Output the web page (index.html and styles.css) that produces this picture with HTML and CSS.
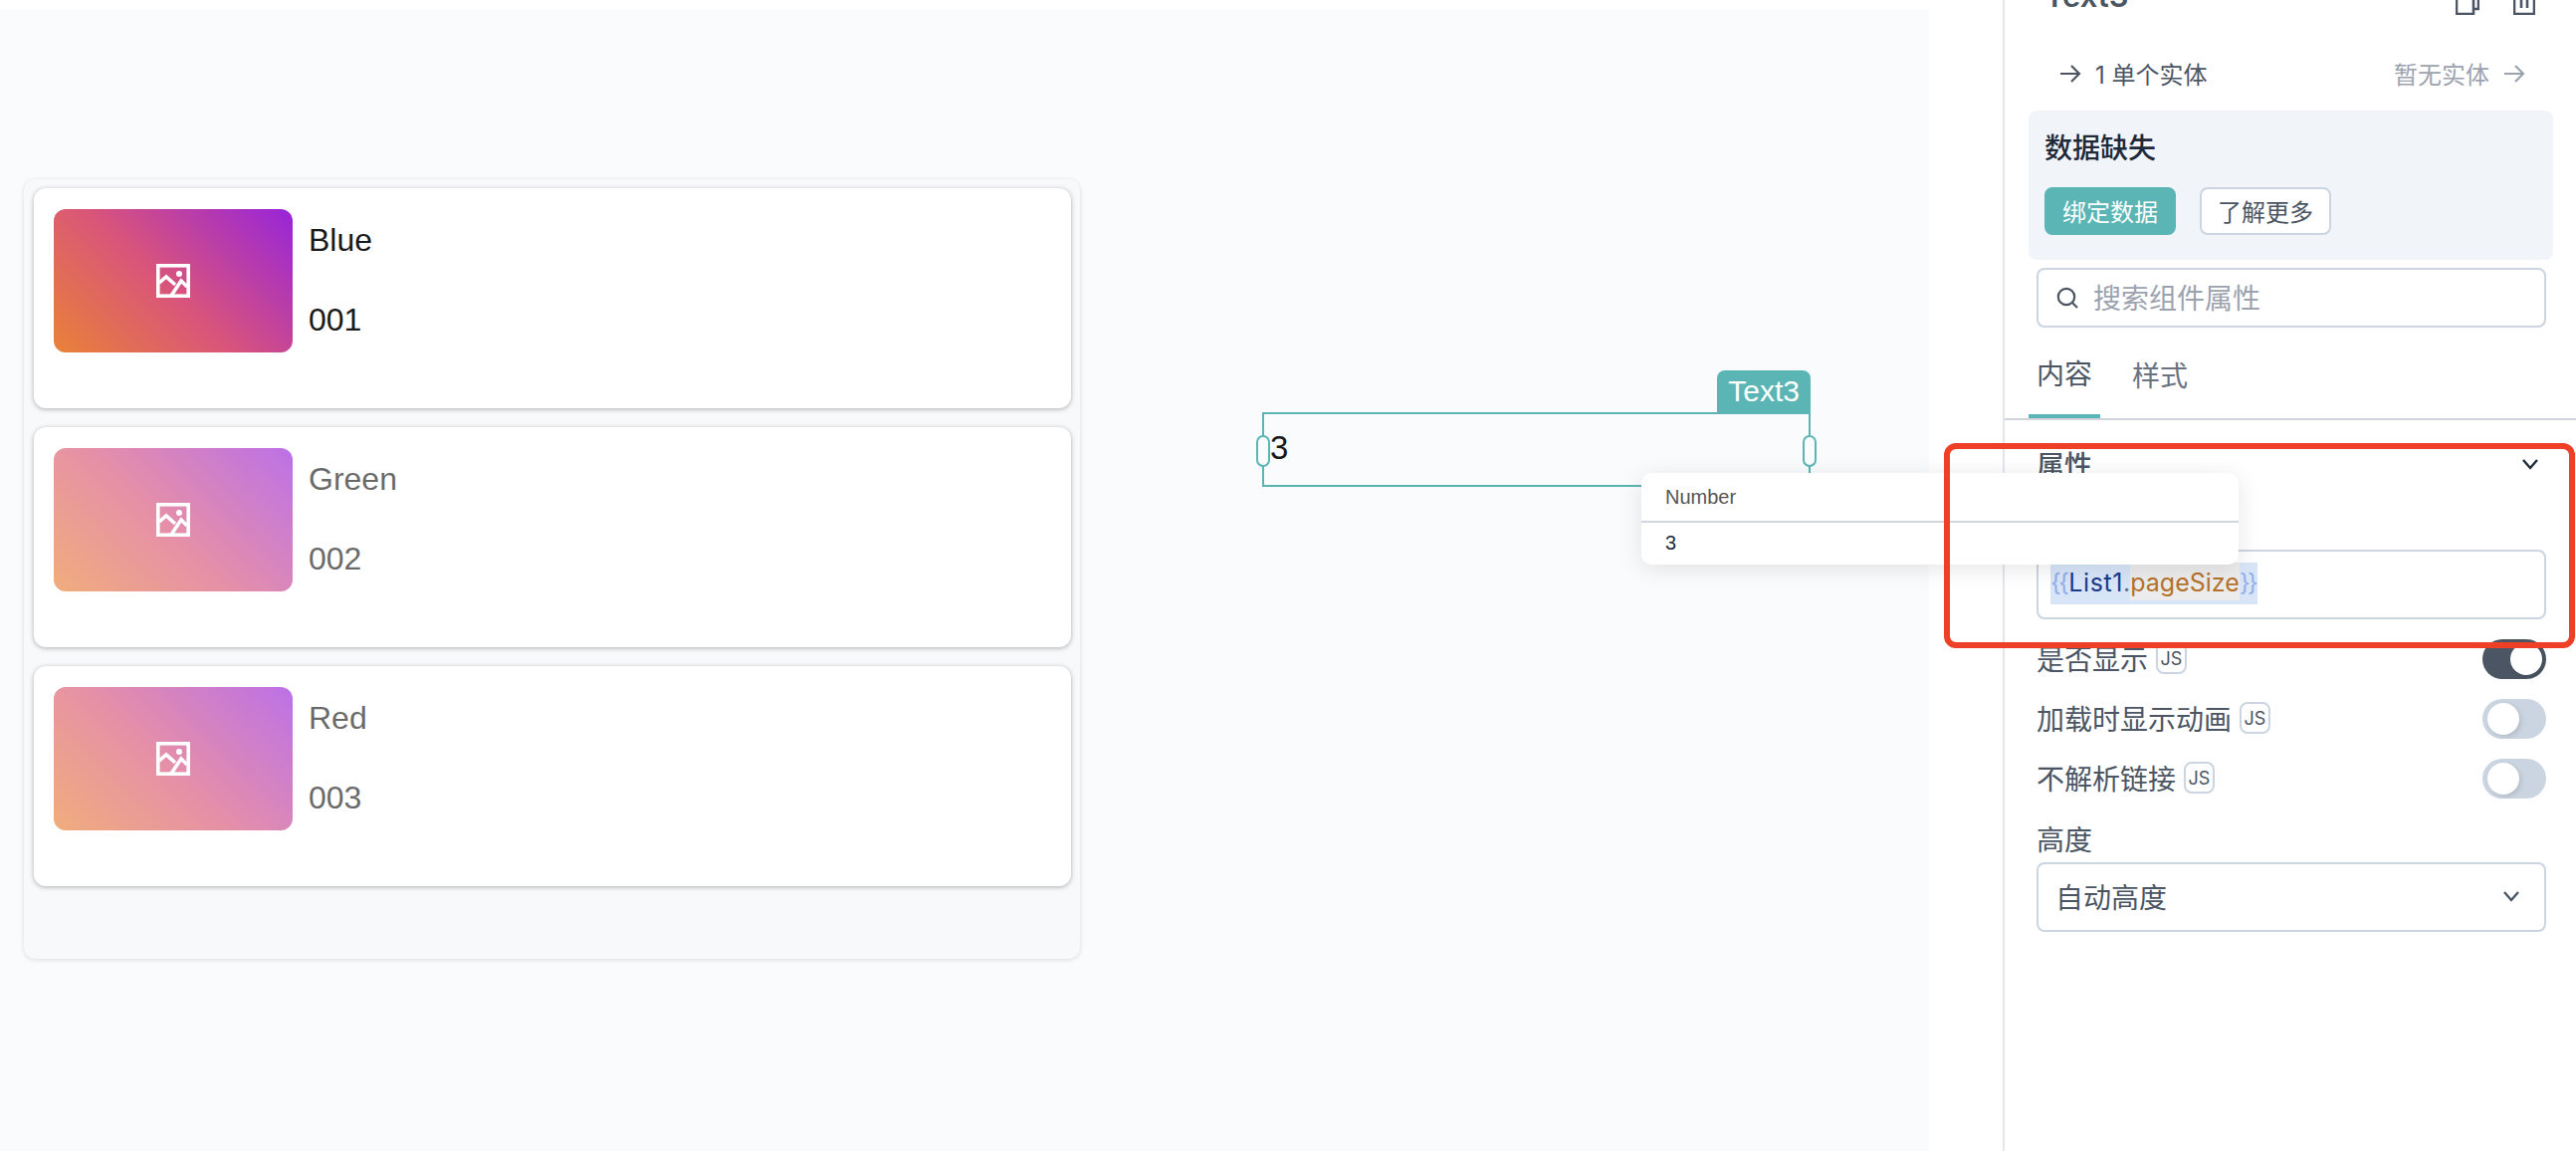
FILE: index.html
```html
<!DOCTYPE html>
<html lang="zh">
<head>
<meta charset="utf-8">
<title>Text3</title>
<link rel="stylesheet" href="styles.css">
</head>
<body>
<div class="app">
  <main class="canvas">
    <div class="list">
      <article class="card">
        <div class="thumb">
          <svg class="thumb-icon" viewBox="0 0 34 34"><rect x="1.8" y="1.8" width="30.4" height="30.4"/><circle cx="23" cy="10" r="3"/><path d="M3 19l7-6 9 8M15 32l10-15 6 6"/></svg>
        </div>
        <div class="card-text"><div>Blue</div><div>001</div></div>
      </article>
      <article class="card dim">
        <div class="thumb">
          <svg class="thumb-icon" viewBox="0 0 34 34"><rect x="1.8" y="1.8" width="30.4" height="30.4"/><circle cx="23" cy="10" r="3"/><path d="M3 19l7-6 9 8M15 32l10-15 6 6"/></svg>
        </div>
        <div class="card-text"><div>Green</div><div>002</div></div>
      </article>
      <article class="card dim">
        <div class="thumb">
          <svg class="thumb-icon" viewBox="0 0 34 34"><rect x="1.8" y="1.8" width="30.4" height="30.4"/><circle cx="23" cy="10" r="3"/><path d="M3 19l7-6 9 8M15 32l10-15 6 6"/></svg>
        </div>
        <div class="card-text"><div>Red</div><div>003</div></div>
      </article>
    </div>
    <div class="widget">
      <span class="widget-tag">Text3</span>
      <span class="widget-value">3</span>
      <span class="handle handle-left"></span>
      <span class="handle handle-right"></span>
    </div>
  </main>

  <aside class="panel">
    <header class="panel-head">
      <h1 class="panel-title">Text3</h1>
      <div class="panel-actions">
        <svg class="action-icon" width="24" height="24" viewBox="0 0 24 24"><path d="M1 5v18h17V5zM18 18h5V2"/></svg>
        <svg class="action-icon" width="22" height="24" viewBox="0 0 22 24"><path d="M1 5v18h20V5zM8 5v12M14 5v12"/></svg>
      </div>
    </header>
    <div class="entity-row">
      <span class="entity entity-on">
        <svg class="arrow" viewBox="0 0 22 20"><path d="M1 10h19M12 2l8 8-8 8"/></svg><span class="entity-text">1 单个实体</span>
      </span>
      <span class="entity entity-off"><span class="entity-text">暂无实体</span>
        <svg class="arrow" viewBox="0 0 22 20"><path d="M1 10h19M12 2l8 8-8 8"/></svg>
      </span>
    </div>
    <section class="callout">
      <div class="callout-title">数据缺失</div>
      <div class="callout-actions">
        <button class="btn btn-primary">绑定数据</button>
        <button class="btn btn-plain">了解更多</button>
      </div>
    </section>
    <div class="search">
      <svg class="search-icon" viewBox="0 0 22 22"><circle cx="10" cy="10" r="8.2"/><path d="M16 16l5 5"/></svg>
      <span class="search-text">搜索组件属性</span>
    </div>
    <nav class="tabs">
      <span class="tab tab-active">内容</span>
      <span class="tab">样式</span>
    </nav>
    <div class="section-head">
      <span>属性</span>
      <svg class="chev-dark" viewBox="0 0 18 12"><path d="M2 2l7 8 7-8"/></svg>
    </div>
    <div class="form">
      <div class="code-input">
        <span class="code"><span class="c-brace">{{</span><span class="c-obj">List1</span><span class="c-dot">.</span><span class="c-prop">pageSize</span><span class="c-brace">}}</span></span>
      </div>
      <div class="toggle-row">
        <span class="toggle-label">是否显示<span class="js">JS</span></span>
        <span class="toggle toggle-on"></span>
      </div>
      <div class="toggle-row">
        <span class="toggle-label">加载时显示动画<span class="js">JS</span></span>
        <span class="toggle"></span>
      </div>
      <div class="toggle-row">
        <span class="toggle-label">不解析链接<span class="js">JS</span></span>
        <span class="toggle"></span>
      </div>
      <div class="field-label">高度</div>
      <div class="select">
        <span>自动高度</span>
        <svg class="chev" viewBox="0 0 18 12"><path d="M2 2l7 8 7-8"/></svg>
      </div>
    </div>
  </aside>

  <div class="tooltip">
    <div class="tooltip-head">Number</div>
    <div class="tooltip-body">3</div>
  </div>
  <div class="annotation"></div>
</div>
</body>
</html>
```
FILE: styles.css
```css
* { box-sizing: border-box; }
html, body { margin: 0; padding: 0; background: #fff; }
body { font-family: Inter, "Noto Sans CJK SC", sans-serif; color: #4b5563; }
.app { position: relative; display: flex; align-items: flex-start; width: 2588px; height: 1156px; overflow: hidden; }

/* canvas */
.canvas { position: relative; flex: none; width: 1938px; height: 1146px; margin-top: 10px; background: #fafbfd; font-family: "Liberation Sans", sans-serif; }
.list { position: absolute; left: 24px; top: 170px; width: 1061px; height: 783px; padding: 9px 9px 0 10px; display: flex; flex-direction: column; gap: 19px; background: #f8f9fb; border-radius: 12px; box-shadow: 0 1px 5px rgba(0,0,0,.13); }
.card { flex: none; height: 221px; padding: 21px 20px; display: flex; align-items: flex-start; background: #fff; border-radius: 12px; box-shadow: 0 1px 5px rgba(0,0,0,.3); }
.thumb { flex: none; width: 240px; height: 144px; display: flex; align-items: center; justify-content: center; border-radius: 12px; background: linear-gradient(45deg, #e8803a 2%, #d9557a 46%, #9a26d6 98%); }
.thumb-icon { width: 34px; height: 34px; fill: none; stroke: #fff; stroke-width: 3.6; }
.thumb-icon circle { fill: #fff; stroke: none; }
.card-text { margin-left: 16px; padding-top: 11px; display: flex; flex-direction: column; gap: 40px; font-size: 32px; line-height: 40px; color: #1a1a1a; }
.dim .thumb, .dim .card-text { opacity: .65; }

.widget { position: absolute; left: 1268px; top: 404px; width: 551px; height: 75px; border: 2px solid #5bb5b5; display: flex; align-items: center; }
.widget-tag { position: absolute; right: -2px; top: -44px; height: 44px; padding: 0 11px; font-size: 30px; line-height: 42px; color: #fff; background: #5bb5b5; border-radius: 8px 8px 0 0; }
.widget-value { padding: 0 0 3px 6px; font-size: 33px; color: #1a1a1a; }
.handle { position: absolute; top: 21px; width: 14px; height: 32px; background: #fafbfd; border: 2px solid #5bb5b5; border-radius: 7px; }
.handle-left { left: -8px; }
.handle-right { right: -8px; }

/* panel */
.panel { flex: none; width: 576px; height: 1156px; margin-left: 74px; border-left: 2px solid #e3e4ec; }
.panel-head { display: flex; justify-content: space-between; align-items: flex-end; height: 44px; margin-top: -30px; padding: 0 40px; }
.panel-title { margin: 0 0 -4px; font-size: 31px; font-weight: 600; line-height: 44px; color: #4b5563; }
.panel-actions { display: flex; gap: 34px; padding-right: 1px; }
.action-icon { display: block; fill: none; stroke: #4b5563; stroke-width: 2.6; margin-bottom: -1px; }
.entity-row { display: flex; justify-content: space-between; align-items: center; height: 40px; margin-top: 40px; padding: 0 51px 0 55px; font-size: 24px; }
.entity { display: flex; align-items: center; gap: 14px; }
.entity-text { padding-bottom: 2px; }
.entity-off { color: #9ca3af; }
.arrow { width: 22px; height: 20px; fill: none; stroke: currentColor; stroke-width: 2.2; }
.callout { width: 527px; height: 150px; margin: 17px 0 0 24px; padding: 20px 16px; background: #f1f5fa; border-radius: 8px; }
.callout-title { font-size: 28px; font-weight: 500; line-height: 36px; color: #1f2937; }
.callout-actions { display: flex; gap: 24px; margin-top: 21px; }
.btn { width: 132px; height: 48px; padding: 0 0 2px; font: inherit; font-size: 24px; border-radius: 8px; border: 2px solid #cbd5e1; }
.btn-primary { color: #fff; background: #5bb5b5; border-color: #5bb5b5; }
.btn-plain { color: #4b5563; background: #fff; }
.search { display: flex; align-items: center; width: 512px; height: 60px; margin: 8px 0 0 32px; padding-left: 18px; border: 2px solid #cbd5e1; border-radius: 8px; }
.search-icon { width: 22px; height: 22px; fill: none; stroke: #4b5563; stroke-width: 2.2; }
.search-text { margin-left: 15px; padding-bottom: 2px; font-size: 28px; color: #9ca3af; }
.tabs { display: flex; gap: 24px; height: 93px; padding: 0 0 0 24px; border-bottom: 2px solid #d1d5db; }
.tab { display: flex; align-items: center; justify-content: center; width: 72px; height: 91px; padding-top: 3px; font-size: 28px; color: #6b7280; }
.tab-active { color: #4b5563; border-bottom: 4px solid #5bb5b5; }
.section-head { display: flex; justify-content: space-between; align-items: center; height: 36px; margin-top: 26px; padding: 0 37px 0 32px; font-size: 28px; font-weight: 500; color: #4b5563; }
.chev-dark { width: 18px; height: 12px; fill: none; stroke: #1f2937; stroke-width: 2.4; }
.form { width: 512px; margin: 68px 0 0 32px; font-size: 28px; }
.code-input { display: flex; align-items: center; height: 70px; padding: 0 0 2px 12px; border: 2px solid #cbd5e1; border-radius: 8px; }
.code { display: block; height: 42px; font-size: 25px; line-height: 40px; background: #d8e5f9; }
.c-brace { color: #93afe8; letter-spacing: -2.5px; padding-right: 2px; }
.c-obj { color: #1d3a8a; letter-spacing: .6px; }
.c-dot { color: #5f6b85; }
.c-prop { display: inline-block; height: 38px; line-height: 40px; vertical-align: top; color: #b5722d; background: #ececec; }
.toggle-row { display: flex; justify-content: space-between; align-items: center; height: 40px; margin-top: 20px; }
.toggle-label { display: flex; align-items: center; padding-bottom: 2px; color: #4b5563; }
.js { display: flex; align-items: center; justify-content: center; width: 31px; height: 32px; margin-left: 8px; font-size: 18px; border: 2px solid #cbd5e1; border-radius: 8px; }
.toggle { position: relative; width: 64px; height: 40px; background: #cbd5e1; border-radius: 20px; }
.toggle::after { content: ""; position: absolute; left: 5px; top: 4px; width: 32px; height: 32px; background: #fff; border-radius: 50%; box-shadow: 2px 2px 5px rgba(0,0,0,.12); }
.toggle-on { background: #4b5563; }
.toggle-on::after { left: 28px; }
.field-label { height: 36px; margin-top: 24px; line-height: 36px; }
.select { display: flex; justify-content: space-between; align-items: center; height: 70px; margin-top: 4px; padding: 0 24px 2px 17px; border: 2px solid #cbd5e1; border-radius: 8px; }
.chev { width: 18px; height: 12px; fill: none; stroke: #4b5563; stroke-width: 2.4; }

/* overlays */
.tooltip { position: absolute; left: 1649px; top: 475px; width: 600px; height: 92px; background: #fff; border-radius: 10px; box-shadow: 0 4px 24px rgba(0,0,0,.1); font-family: "Liberation Sans", sans-serif; font-size: 20px; }
.tooltip-head { height: 50px; padding-left: 24px; line-height: 48px; color: #555; border-bottom: 2px solid #d1d5e0; }
.tooltip-body { height: 42px; padding-left: 24px; line-height: 40px; color: #1f2937; }
.annotation { position: absolute; left: 1953px; top: 445px; width: 634px; height: 206px; border: 6px solid #ee4027; border-radius: 12px; }
```
